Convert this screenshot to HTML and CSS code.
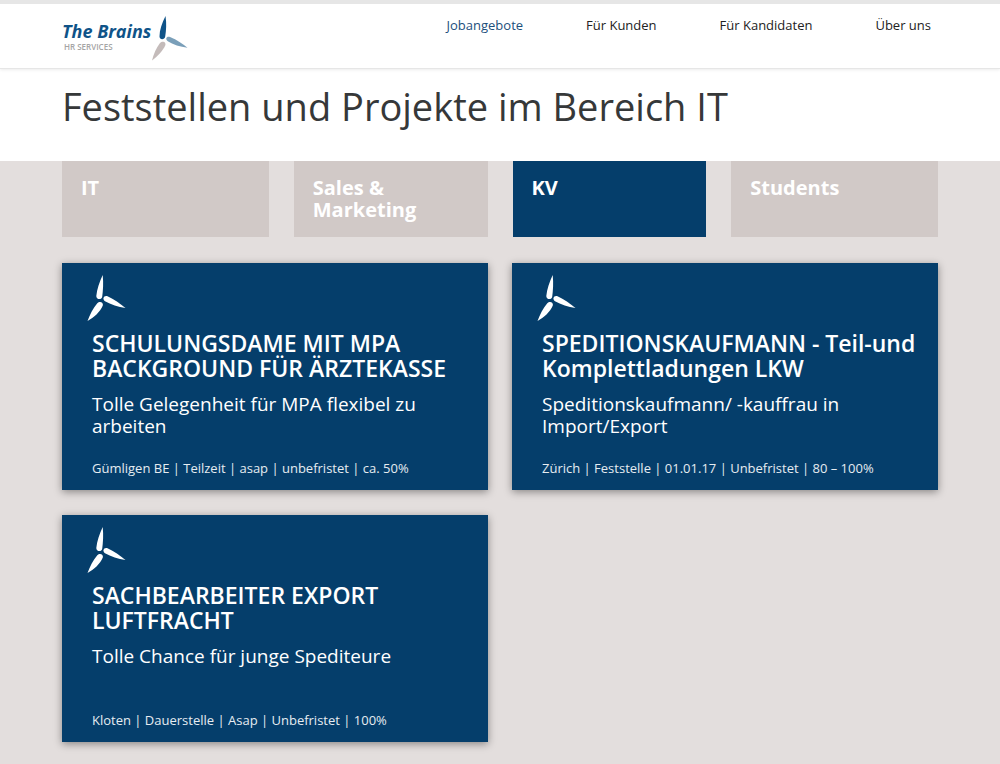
FILE: index.html
```html
<!DOCTYPE html>
<html lang="de">
<head>
<meta charset="utf-8">
<meta name="viewport" content="width=device-width, initial-scale=1">
<title>The Brains HR Services – Jobangebote</title>
<link rel="stylesheet" href="styles.css">
</head>
<body>
<svg class="sprite" aria-hidden="true">
  <symbol id="rotor" viewBox="0 0 40 48">
    <path d="M15.700 1 C12.500 8 10 15 9.300 22 C9.100 25.800 14.800 26.200 15.200 22.800 C16 17 16.600 9 15.700 1Z"/>
    <path d="M38.500 34 C33 29.500 27 25.500 20.500 22.300 C16.800 21 14.800 25.200 18 27.200 C24 30.500 31 33.200 38.500 34Z"/>
    <path d="M.5 47 C7 43.500 13 38 15.800 31.500 C16.800 28.300 12.600 26.500 10.300 29.300 C6 34.500 3 40.500 .5 47Z"/>
  </symbol>
</svg>
<header class="header">
  <div class="container header-row">
    <a class="logo" href="#">
      <span class="logo-text">
        <span class="logo-name">The Brains</span>
        <span class="logo-sub">HR SERVICES</span>
      </span>
      <svg class="logo-mark" viewBox="0 0 38 46" aria-hidden="true">
        <path fill="#0f5388" d="M14.500 0 C11 7 8.500 14 8.500 20.500 C8.700 24.300 13.700 23.800 14.200 20.500 C15.200 14 15.700 8 14.500 0Z"/>
        <path fill="#7a9fb9" d="M36.500 31.700 C29 31 22 28.500 16.800 25.300 C14 23 15.300 20 19 21 C26 24 31.500 27.500 36.500 31.700Z"/>
        <path fill="#c4bbba" d="M1 44.500 C2.500 38 5.500 31.500 9 27 C11.500 24.200 15.500 26 14.200 29.500 C12 34.500 7 40 1 44.500Z"/>
      </svg>
    </a>
    <nav class="nav">
      <a class="nav-link active" href="#">Jobangebote</a>
      <a class="nav-link" href="#">Für Kunden</a>
      <a class="nav-link" href="#">Für Kandidaten</a>
      <a class="nav-link" href="#">Über uns</a>
    </nav>
  </div>
</header>
<main class="main">
  <div class="title-band">
    <h1 class="container title">Feststellen und Projekte im Bereich IT</h1>
  </div>
  <div class="container">
    <nav class="tabs">
      <a class="tab" href="#">IT</a>
      <a class="tab" href="#">Sales &amp; Marketing</a>
      <a class="tab current" href="#">KV</a>
      <a class="tab" href="#">Students</a>
    </nav>
    <div class="jobs">
      <article class="job">
        <svg class="rotor" aria-hidden="true"><use href="#rotor"/></svg>
        <h2 class="job-title">SCHULUNGSDAME MIT MPA BACKGROUND FÜR ÄRZTEKASSE</h2>
        <p class="job-lead">Tolle Gelegenheit für MPA flexibel zu arbeiten</p>
        <p class="job-meta">Gümligen BE | Teilzeit | asap | unbefristet | ca. 50%</p>
      </article>
      <article class="job">
        <svg class="rotor" aria-hidden="true"><use href="#rotor"/></svg>
        <h2 class="job-title">SPEDITIONSKAUFMANN - Teil-und Komplettladungen LKW</h2>
        <p class="job-lead">Speditionskaufmann/ -kauffrau in Import/Export</p>
        <p class="job-meta">Zürich | Feststelle | 01.01.17 | Unbefristet | 80 – 100%</p>
      </article>
      <article class="job">
        <svg class="rotor" aria-hidden="true"><use href="#rotor"/></svg>
        <h2 class="job-title">SACHBEARBEITER EXPORT LUFTFRACHT</h2>
        <p class="job-lead">Tolle Chance für junge Spediteure</p>
        <p class="job-meta">Kloten | Dauerstelle | Asap | Unbefristet | 100%</p>
      </article>
    </div>
  </div>
</main>
</body>
</html>
```
FILE: styles.css
```css
* { box-sizing: border-box; }

body {
  margin: 0;
  background: #e3dedd;
  color: #363839;
  font-family: "Open Sans", "Noto Sans", sans-serif;
  font-size: 13px;
}

h1, h2, p { margin: 0; }
a { color: inherit; text-decoration: none; }
.sprite { display: none; }

.container {
  max-width: 1124px;
  margin: 0 auto;
  padding: 0 62px;
}

.header {
  position: relative;
  min-height: 69px;
  border-top: 4px solid #e6e6e6;
  border-bottom: 1px solid #e6e6e6;
  background: #fff;
  box-shadow: 0 1px 3px rgba(0, 0, 0, .08);
}

.header-row {
  display: flex;
  justify-content: space-between;
  align-items: flex-start;
}

.logo { display: flex; padding-top: 12px; }
.logo-text { display: flex; flex-direction: column; padding-top: 5px; }
.logo-name {
  color: #0f5388;
  font-size: 18px;
  font-style: italic;
  font-weight: 700;
  line-height: 21px;
}
.logo-sub {
  padding-left: 2px;
  color: #a5a5a5;
  font-size: 8px;
  font-weight: 600;
  line-height: 10px;
}
.logo-mark { width: 38px; height: 46px; }

.nav { display: flex; gap: 63px; padding: 11px 7px 0 0; }
.nav-link { color: #222; line-height: 20px; }
.nav-link.active { color: #1c4f7c; }

.title-band { min-height: 92px; padding-top: 12px; background: #fff; }
.title { font-size: 38px; font-weight: 400; line-height: 50px; }

.tabs {
  display: grid;
  grid-template-columns: 207fr 194fr 194fr 207fr;
  gap: 25px;
}
.tab {
  min-height: 76px;
  padding: 16px 19px;
  background: #d1c9c7;
  color: #fff;
  font-size: 20px;
  font-weight: 700;
  line-height: 22px;
}
.tab.current { background: #053e6b; }

.jobs {
  display: grid;
  grid-template-columns: repeat(2, minmax(0, 1fr));
  gap: 25px 24px;
  padding: 26px 0 22px;
}
.job {
  display: flex;
  flex-direction: column;
  min-height: 227px;
  padding: 11px 12px 12px 30px;
  background: #053e6b;
  box-shadow: 0 2px 8px rgba(0, 0, 0, .4);
  color: #fff;
}
.rotor { width: 40px; height: 48px; margin-left: -5px; fill: #fff; }
.job-title { margin-top: 9px; font-size: 23px; font-weight: 600; line-height: 25px; }
.job-lead { margin-top: 12px; font-size: 19px; line-height: 22px; }
.job-meta { margin-top: auto; color: #e6ecf1; line-height: 20px; }
```
